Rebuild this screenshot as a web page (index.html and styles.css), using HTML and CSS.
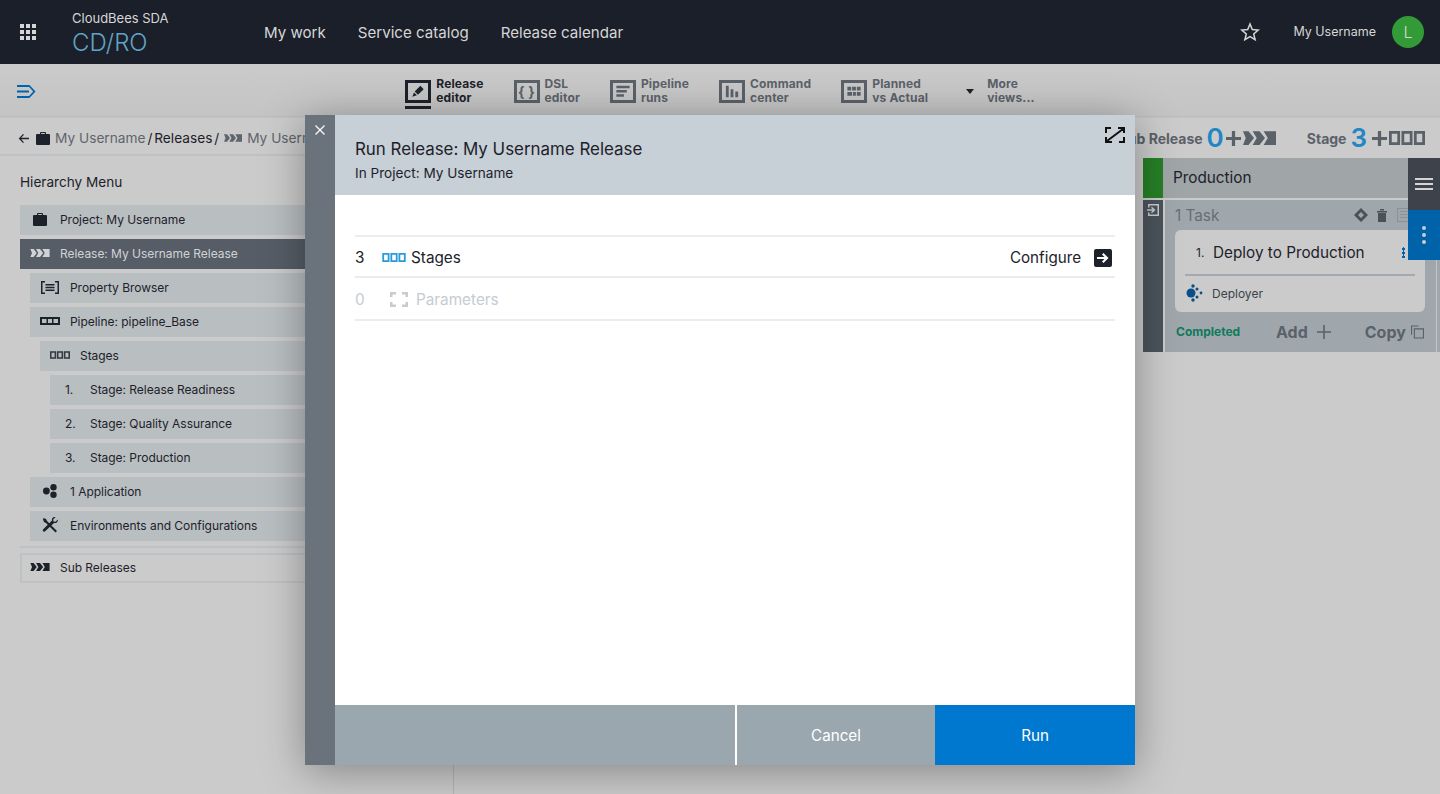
FILE: index.html
```html
<!DOCTYPE html>
<html lang="en">
	<head>
		<meta charset="utf-8">
		<title>Run Release</title>
		<link rel="stylesheet" href="styles.css">
	</head>
	<body>
		<svg class="sprite" width="0" height="0">
			<symbol id="i-release" viewBox="0 0 24 10"><path d="M0 0h4l4 5-4 5H0l2-5zM7 0h5l4 5-4 5H7l3-5zM15 0h9v10h-9l3-5z"/></symbol>
			<symbol id="i-stages" viewBox="0 0 26 10"><path fill-rule="evenodd" d="M0 0h8v10H0zM2 2v6h4V2zM9 0h8v10H9zM11 2v6h4V2zM18 0h8v10h-8zM20 2v6h4V2z"/></symbol>
			<symbol id="i-case" viewBox="0 0 14 13"><path fill-rule="evenodd" d="M4 2V1q0-1 1-1h4q1 0 1 1v1h3q1 0 1 1v9q0 1-1 1H1q-1 0-1-1V3q0-1 1-1zM5.200 1v1h3.600V1z"/></symbol>
			<symbol id="i-plus" viewBox="0 0 14 14"><path d="M5.500 0h3v5.500H14v3H8.500V14h-3V8.500H0v-3h5.500z"/></symbol>
		</svg>

		<header class="topbar">
			<svg class="apps" viewBox="0 0 16 16"><path d="M0 0h4v4H0zM6 0h4v4H6zM12 0h4v4h-4zM0 6h4v4H0zM6 6h4v4H6zM12 6h4v4h-4zM0 12h4v4H0zM6 12h4v4H6zM12 12h4v4h-4z"/></svg>
			<div class="logo">
				<div class="logo-top">CloudBees SDA</div>
				<div class="logo-name">CD/RO</div>
			</div>
			<nav class="topnav">
				<span>My work</span>
				<span>Service catalog</span>
				<span>Release calendar</span>
			</nav>
			<svg class="star" viewBox="0 0 20 20"><path d="M10 2l2.300 5.500 5.900.5-4.500 3.900 1.400 5.800L10 14.600l-5.100 3.100 1.400-5.800L1.800 8l5.900-.5z"/></svg>
			<span class="username">My Username</span>
			<span class="avatar">L</span>
		</header>

		<div class="viewbar">
			<svg class="toggle" viewBox="0 0 19 13"><path d="M0 0h12v2H0zM0 5.500h12v2H0zM0 11h12v2H0zM12.500 0l6 6.500-6 6.500-1.300-1 5-5.500-5-5.500z"/></svg>
			<div class="tabs">
				<div class="tab active">
					<span class="tab-icon"><svg viewBox="0 0 20 18"><path d="M12.500 3l3.500 3.500-6 6L6.500 9zM5.800 10l3 3L4 14.500z"/></svg></span>
					<span>Release<br>editor</span>
				</div>
				<div class="tab">
					<span class="tab-icon tab-code">{ }</span>
					<span>DSL<br>editor</span>
				</div>
				<div class="tab">
					<span class="tab-icon"><svg viewBox="0 0 20 18"><path d="M3 3h14v2.500H3zM3 7.500h11V10H3zM3 12h8v2.500H3z"/></svg></span>
					<span>Pipeline<br>runs</span>
				</div>
				<div class="tab">
					<span class="tab-icon"><svg viewBox="0 0 20 18"><path d="M3.500 3h3v12h-3zM8.500 6.500h3V15h-3zM13.500 9h3v6h-3z"/></svg></span>
					<span>Command<br>center</span>
				</div>
				<div class="tab">
					<span class="tab-icon"><svg viewBox="0 0 20 18"><path d="M3 4h4v4H3zM8 4h4v4H8zM13 4h4v4h-4zM3 9.500h5v4H3zM9 9.500h3v4H9zM13 9.500h4v4h-4z"/></svg></span>
					<span>Planned<br>vs Actual</span>
				</div>
				<div class="tab tab-more">
					<span class="caret"></span>
					<span>More<br>views...</span>
				</div>
			</div>
		</div>

		<div class="workspace">
			<aside class="sidebar">
				<div class="crumbs">
					<svg class="crumb-back" viewBox="0 0 12 12"><path d="M5.500 1L.8 6l4.700 5 1-1-3-3.200H12V5.200H3.500l3-3.200z"/></svg>
					<svg class="crumb-case"><use href="#i-case"/></svg>
					<span>My Username</span>
					<span class="crumb-now">/ Releases /</span>
					<svg class="crumb-rel"><use href="#i-release"/></svg>
					<span>My Username Release</span>
				</div>
				<h2 class="menu-title">Hierarchy Menu</h2>
				<ul class="menu">
					<li class="row">
						<span class="slot"><svg class="ic-case"><use href="#i-case"/></svg></span>Project: My Username
					</li>
					<li class="row current">
						<span class="slot"><svg class="ic-rel"><use href="#i-release"/></svg></span>Release: My Username Release
					</li>
					<li class="row lv2">
						<span class="slot"><svg class="ic-prop" viewBox="0 0 18 13"><path d="M0 0h4v1.500H1.500v10H4V13H0zM18 0h-4v1.500h2.500v10H14V13h4zM4.500 3h9v1.500h-9zM4.500 5.700h9v1.500h-9zM4.500 8.400h9v1.500h-9z"/></svg></span>Property Browser
					</li>
					<li class="row lv2">
						<span class="slot"><svg class="ic-pipe" viewBox="0 0 20 8"><path fill-rule="evenodd" d="M0 0h20v8H0zM2 2v4h4.500V2zM8 2v4h4V2zM13.500 2v4H18V2z"/></svg></span>Pipeline: pipeline_Base
					</li>
					<li class="row lv3">
						<span class="slot"><svg class="ic-stages"><use href="#i-stages"/></svg></span>Stages
					</li>
					<li class="row lv4"><span class="slot num">1.</span>Stage: Release Readiness</li>
					<li class="row lv4"><span class="slot num">2.</span>Stage: Quality Assurance</li>
					<li class="row lv4"><span class="slot num">3.</span>Stage: Production</li>
					<li class="row lv2">
						<span class="slot"><svg class="ic-apps" viewBox="0 0 14 14"><circle cx="3.400" cy="7" r="3.400"/><circle cx="10.500" cy="3.200" r="3.200"/><circle cx="10.500" cy="10.800" r="3.200"/></svg></span>1 Application
					</li>
					<li class="row lv2">
						<span class="slot"><svg class="ic-tools" viewBox="0 0 16 16"><path d="M1.500 1l2.500 1 1 2 8.500 8.500 1.500 1.500-1.500 1.500-1.500-1.500L4 6 2 5 1 2.500z"/><path d="M15.800 2.500l-2.300 2.300-2-.3-.3-2L13.500.2c-1.700-.6-4 .8-3.500 3.300L1.500 12c-.9 1-.9 1.600-.4 2.200.6.700 1.400.7 2.300-.2L12 6c2.500.5 4.300-1.500 3.800-3.500z"/></svg></span>Environments and Configurations
					</li>
					<li class="menu-rule"></li>
					<li class="row outline">
						<span class="slot"><svg class="ic-rel"><use href="#i-release"/></svg></span>Sub Releases
					</li>
				</ul>
			</aside>

			<main class="canvas">
				<div class="stats">
					<span class="stat-name">Sub Release</span>
					<span class="stat-num stat-tight">0</span>
					<svg class="stat-plus"><use href="#i-plus"/></svg>
					<svg class="stat-rel"><use href="#i-release"/></svg>
					<span class="stat-name stat-gap">Stage</span>
					<span class="stat-num">3</span>
					<svg class="stat-plus"><use href="#i-plus"/></svg>
					<svg class="stat-stg"><use href="#i-stages"/></svg>
				</div>
				<section class="stage">
					<div class="stage-head">
						<span class="stage-color"></span>
						<span class="stage-name">Production</span>
					</div>
					<div class="stage-body">
						<div class="stage-strip">
							<svg viewBox="0 0 12 12"><path d="M1 0h11v12H1V8.500h1.500v2h8v-9h-8v2H1z"/><path d="M0 5.200h5.500L4 3.700l1-1L8.500 6 5 9.300l-1-1 1.500-1.500H0z"/></svg>
						</div>
						<div class="tasks">
							<div class="tasks-head">
								<span>1 Task</span>
								<svg class="tasks-ic" viewBox="0 0 14 14"><path fill-rule="evenodd" d="M7 0l7 7-7 7-7-7zM7 4L4 7l3 3 3-3z"/></svg>
								<svg class="tasks-ic" viewBox="0 0 14 14"><path d="M2 3h10v1.500H2zM5 1h4v1.500H5zM3 5h8v9H3z"/></svg>
								<svg class="tasks-ic tasks-list" viewBox="0 0 16 14"><path fill-rule="evenodd" d="M0 0h16v14H0zM1 1v12h14V1zM3 3h10v1H3zM3 6h10v1H3zM3 9h10v1H3z"/></svg>
							</div>
							<div class="card">
								<div class="card-title">
									<span class="card-num">1.</span>
									<span class="card-name">Deploy to Production</span>
									<span class="card-kebab"></span>
								</div>
								<div class="card-foot">
									<svg viewBox="0 0 18 18"><circle cx="6" cy="9" r="4.500"/><circle cx="8" cy="2" r="1.700"/><circle cx="12" cy="5" r="1.500"/><circle cx="16" cy="9" r="1.400"/><circle cx="12" cy="13" r="1.500"/><circle cx="8" cy="16" r="1.700"/></svg>
									<span>Deployer</span>
								</div>
							</div>
							<div class="tasks-foot">
								<span class="status">Completed</span>
								<span class="foot-add">Add</span>
								<svg class="foot-plus" viewBox="0 0 14 14"><path d="M6.200 0h1.600v6.200H14v1.600H7.800V14H6.200V7.800H0V6.200h6.200z"/></svg>
								<span class="foot-copy">Copy</span>
								<svg class="foot-dup" viewBox="0 0 14 14"><path fill-rule="evenodd" d="M0 0h8v1.200H1.200V10H0zM3 3h11v11H3zM4.200 4.200v8.600h8.600V4.200z"/></svg>
							</div>
						</div>
						<div class="next-stage"></div>
					</div>
				</section>
				<div class="side-tools">
					<button class="side-menu"><span></span><span></span><span></span></button>
					<button class="side-more"><span></span><span></span><span></span></button>
				</div>
			</main>
		</div>

		<div class="dialog">
			<div class="dialog-rail">
				<svg viewBox="0 0 10 10"><path d="M1 0l4 4 4-4 1 1-4 4 4 4-1 1-4-4-4 4-1-1 4-4-4-4z"/></svg>
			</div>
			<div class="dialog-main">
				<div class="dialog-head">
					<div class="dialog-title">Run Release: My Username Release</div>
					<div class="dialog-sub">In Project: My Username</div>
					<svg class="dialog-expand" viewBox="0 0 20 16"><path d="M1 6V1h5M19 10v5h-5M2 14L18 2M13 1h6v5M7 15H1v-5"/></svg>
				</div>
				<div class="dialog-body">
					<div class="line">
						<span class="line-count">3</span>
						<svg class="line-stages"><use href="#i-stages"/></svg>
						<span>Stages</span>
						<span class="line-action">Configure</span>
						<svg class="line-go" viewBox="0 0 18 18"><path fill-rule="evenodd" d="M2 0h14q2 0 2 2v14q0 2-2 2H2q-2 0-2-2V2q0-2 2-2zM9.500 4L8 5.500 10.500 8H3v2h7.500L8 12.500 9.500 14l5-5z"/></svg>
					</div>
					<div class="line disabled">
						<span class="line-count">0</span>
						<svg class="line-params" viewBox="0 0 18 15"><path d="M0 0h6v2.500H2.500v2.500H0zM18 0h-6v2.500h3.500v2.500H18zM0 15h6v-2.500H2.500V10H0zM18 15h-6v-2.500h3.500V10H18z"/></svg>
						<span>Parameters</span>
					</div>
				</div>
				<div class="dialog-foot">
					<span class="foot-space"></span>
					<button class="btn-cancel">Cancel</button>
					<button class="btn-run">Run</button>
				</div>
			</div>
		</div>
	</body>
</html>
```

FILE: styles.css
```css
* {
	box-sizing: border-box;
}

body {
	position: relative;
	width: 1440px;
	height: 794px;
	margin: 0;
	overflow: hidden;
	font-family: Inter, 'Liberation Sans', sans-serif;
	color: #1d222a;
	background-color: #cbcbcb;
}

svg {
	display: block;
	fill: currentColor;
	flex: none;
}

.sprite {
	position: absolute;
}

/* Top bar */

.topbar {
	display: flex;
	align-items: center;
	height: 64px;
	padding-left: 20px;
	padding-right: 16px;
	color: #d6d6d6;
	background-color: #1a1f29;
}

.apps {
	width: 16px;
	height: 16px;
}

.logo {
	width: 192px;
	margin-left: 36px;
}

.logo-top {
	font-size: 13px;
	line-height: 16px;
	margin-top: 4px;
}

.logo-name {
	font-size: 24px;
	line-height: 30px;
	margin-top: 2px;
	font-weight: 300;
	color: #62a3c6;
}

.topnav {
	display: flex;
	gap: 32px;
	font-size: 15.100px;
	flex: 1;
}

.star {
	width: 20px;
	height: 20px;
	fill: none;
	stroke: currentColor;
	stroke-width: 1.5;
	margin-right: 33px;
}

.username {
	font-size: 12.500px;
	margin-right: 16px;
	margin-top: -2px;
}

.avatar {
	display: flex;
	align-items: center;
	justify-content: center;
	width: 32px;
	height: 32px;
	border-radius: 50%;
	font-size: 16px;
	font-weight: 300;
	background-color: #329b38;
}

/* Views */

.viewbar {
	display: grid;
	grid-template-columns: 1fr auto 1fr;
	align-items: center;
	height: 52px;
	padding-left: 17px;
	padding-top: 2px;
	background-image: linear-gradient(to bottom, #cacaca, #c4c4c4);
	box-shadow: 0 1px 2px rgba(0, 0, 0, 0.1);
}

.toggle {
	width: 19px;
	height: 13px;
	color: #0064ad;
}

.tabs {
	display: flex;
	gap: 30px;
	grid-column: 2;
	margin-left: -17px;
}

.tab {
	position: relative;
	display: flex;
	align-items: center;
	gap: 5px;
	font-size: 12px;
	line-height: 14px;
	font-weight: 700;
	letter-spacing: 0.15px;
	color: #5b6169;
}

.tab-icon {
	display: flex;
	align-items: center;
	justify-content: center;
	width: 26px;
	height: 23px;
	margin-top: 1px;
	border: 3px solid currentColor;
}

.tab-icon svg {
	width: 20px;
	height: 17px;
}

.tab-code {
	font-size: 14px;
	font-weight: 700;
}

.active {
	color: #1d222a;
}

.active::after {
	content: '';
	position: absolute;
	left: 0;
	bottom: -4px;
	width: 26px;
	height: 3px;
	background-color: #1d222a;
}

.tab-more {
	gap: 13px;
	margin-left: 8px;
}

.caret {
	border-style: solid;
	border-width: 5px 4.500px 0 4.500px;
	border-color: #1d222a transparent transparent transparent;
}

/* Hierarchy */

.workspace {
	display: flex;
	height: 678px;
}

.sidebar {
	width: 454px;
	border-right: 1px solid #b5b5b5;
	overflow: hidden;
	flex: none;
}

.crumbs {
	display: flex;
	align-items: center;
	gap: 2px;
	height: 40px;
	padding-left: 18px;
	padding-top: 6px;
	font-size: 13.700px;
	color: #5f656c;
	white-space: nowrap;
	border-bottom: 2px solid #bdc2c5;
}

.crumb-back {
	width: 11px;
	height: 11px;
	color: #1d222a;
	margin-right: 5px;
}

.crumb-case {
	width: 14px;
	height: 13px;
	color: #1d222a;
	margin-right: 3px;
}

.crumb-now {
	color: #1d222a;
	word-spacing: -2px;
}

.crumb-rel {
	width: 18px;
	height: 8px;
	margin-left: 3px;
	margin-right: 3px;
}

.menu-title {
	margin: 17px 0 14px 20px;
	font-size: 13.600px;
	line-height: 18px;
	font-weight: 400;
}

.menu {
	display: flex;
	flex-direction: column;
	gap: 4px;
	margin: 0;
	padding: 0 0 0 20px;
	list-style: none;
}

.row {
	display: flex;
	align-items: center;
	height: 30px;
	padding-left: 10px;
	padding-bottom: 2px;
	font-size: 12px;
	letter-spacing: -0.04px;
	white-space: nowrap;
	background-color: #b9bec1;
}

.slot {
	display: flex;
	align-items: center;
	width: 30px;
	flex: none;
}

.num {
	padding-left: 5px;
}

.current {
	color: #cfd3d6;
	background-color: #565d66;
}

.lv2 {
	margin-left: 10px;
}

.lv3 {
	margin-left: 20px;
}

.lv4 {
	margin-left: 30px;
}

.menu-rule {
	height: 2px;
	margin-top: 1px;
	margin-bottom: 1px;
	background-color: #bdc2c5;
}

.outline {
	background: none;
	border: 2px solid #bdc2c5;
	padding-left: 8px;
}

.ic-case {
	width: 14px;
	height: 13px;
	margin-left: 3px;
}

.ic-rel {
	width: 20px;
	height: 8px;
}

.ic-prop {
	width: 18px;
	height: 13px;
	margin-left: 1px;
}

.ic-pipe {
	width: 20px;
	height: 8px;
}

.ic-stages {
	width: 20px;
	height: 8px;
	color: #333941;
}

.ic-apps {
	width: 14px;
	height: 14px;
	margin-left: 3px;
}

.ic-tools {
	width: 16px;
	height: 16px;
	margin-left: 2px;
}

/* Stage view */

.canvas {
	flex: 1;
	min-width: 0;
	position: relative;
}

.stats {
	display: flex;
	align-items: center;
	justify-content: flex-end;
	height: 42px;
	padding-right: 15px;
	padding-top: 2px;
	color: #5b6169;
}

.stat-name {
	font-size: 14px;
	font-weight: 700;
}

.stat-gap {
	margin-left: 31px;
}

.stat-num {
	margin-left: 4px;
	font-size: 26px;
	line-height: 26px;
	font-weight: 600;
	color: #2186c4;
}

.stat-tight {
	margin-right: -3px;
}

.stat-plus {
	width: 15px;
	height: 15px;
	margin-left: 5px;
	margin-right: 2px;
}

.stat-rel {
	width: 33px;
	height: 14px;
}

.stat-stg {
	width: 36px;
	height: 14px;
}

.stage {
	width: 297px;
	margin-left: auto;
}

.stage-head {
	display: flex;
	align-items: center;
	height: 40px;
	margin-bottom: 2px;
	background-color: #a0a5a8;
}

.stage-color {
	width: 20px;
	height: 100%;
	background-color: #267f26;
}

.stage-name {
	margin-left: 10px;
	margin-top: -2px;
	font-size: 15.300px;
}

.stage-body {
	display: flex;
	gap: 2px;
	height: 152px;
}

.stage-strip {
	width: 20px;
	padding: 4px;
	color: #c8ccce;
	background-color: #4b535b;
}

.stage-strip svg {
	width: 12px;
	height: 12px;
}

.tasks {
	width: 271px;
	padding: 0 11px 0 10px;
	background-color: #9fa7ad;
}

.tasks-head {
	display: flex;
	align-items: center;
	gap: 7px;
	height: 30px;
	padding-right: 11px;
	font-size: 15.300px;
	color: #676e75;
}

.tasks-head span {
	flex: 1;
}

.tasks-ic {
	width: 14px;
	height: 14px;
	color: #4a5159;
}

.tasks-list {
	width: 18px;
	color: #8a9298;
}

.card {
	height: 82px;
	padding: 0 10px;
	border-radius: 6px;
	background-color: #cbcbcb;
}

.card-title {
	display: flex;
	align-items: center;
	height: 46px;
	padding-left: 11px;
	border-bottom: 2px solid #a3a9ae;
}

.card-num {
	width: 17px;
	font-size: 12px;
}

.card-name {
	flex: 1;
	font-size: 15.300px;
}

.card-kebab {
	width: 3px;
	height: 11px;
	margin-right: 10px;
	background-image: radial-gradient(circle, #0064ad 1.500px, transparent 1.600px);
	background-size: 3px 4px;
}

.card-foot {
	display: flex;
	align-items: center;
	gap: 9px;
	height: 36px;
	padding-bottom: 2px;
	font-size: 12px;
	color: #3c4249;
}

.card-foot svg {
	width: 18px;
	height: 18px;
	color: #0b4f86;
}

.tasks-foot {
	display: flex;
	align-items: center;
	height: 40px;
	font-weight: 700;
	font-size: 16px;
	color: #5b6169;
}

.status {
	width: 100px;
	margin-left: 1px;
	margin-top: -2px;
	font-size: 12px;
	color: #0e7a5a;
}

.foot-plus {
	width: 14px;
	height: 14px;
	margin-left: 9px;
	margin-right: 34px;
}

.foot-dup {
	width: 13px;
	height: 14px;
	margin-left: 5px;
}

.next-stage {
	flex: 1;
	border-left: 1px solid #c6c6c6;
	background-color: #9fa7ad;
	margin-left: -2px;
}

/* Right hand tools, they sit over the stage */

.side-tools {
	position: absolute;
	top: 42px;
	right: 0;
	width: 32px;
}

.side-tools button {
	display: flex;
	align-items: center;
	justify-content: center;
	flex-direction: column;
	width: 32px;
	padding: 0;
	border: 0;
}

.side-menu {
	height: 52px;
	gap: 3px;
	background-color: #3e424a;
}

.side-menu span {
	width: 18px;
	height: 2px;
	background-color: #d4d4d4;
}

.side-more {
	height: 50px;
	gap: 3px;
	background-color: #0062a8;
}

.side-more span {
	width: 4px;
	height: 4px;
	border-radius: 50%;
	background-color: #c6ced6;
}

/* Dialog */

.dialog {
	position: absolute;
	left: 305px;
	top: 115px;
	display: flex;
	width: 830px;
	height: 650px;
	box-shadow: 0 6px 40px rgba(0, 0, 0, 0.35);
}

.dialog-rail {
	width: 30px;
	padding: 10px;
	color: #f2f2f2;
	background-color: #6a727c;
}

.dialog-rail svg {
	width: 10px;
	height: 10px;
}

.dialog-main {
	display: flex;
	flex-direction: column;
	flex: 1;
	background-color: white;
}

.dialog-head {
	position: relative;
	height: 80px;
	padding: 23px 20px 0;
	background-color: #c7cfd7;
}

.dialog-title {
	font-size: 16.900px;
	line-height: 22px;
}

.dialog-sub {
	margin-top: 4px;
	font-size: 13.600px;
	line-height: 18px;
}

.dialog-expand {
	position: absolute;
	top: 12px;
	right: 10px;
	width: 20px;
	height: 16px;
	fill: none;
	stroke: #111;
	stroke-width: 2;
}

.dialog-body {
	flex: 1;
	padding: 40px 20px 0;
}

.line {
	display: flex;
	align-items: center;
	height: 41px;
	padding-top: 2px;
	font-size: 15.300px;
	border-top: 2px solid #e9edf0;
}

.line:last-child {
	height: 45px;
	border-bottom: 2px solid #e9edf0;
}

.line-count {
	width: 27px;
	font-size: 15.300px;
}

.line-stages {
	width: 24px;
	height: 9px;
	margin-right: 5px;
	color: #2b9ad8;
}

.line-action {
	margin-left: auto;
	font-size: 15.200px;
}

.line-go {
	width: 18px;
	height: 18px;
	margin-left: 13px;
	margin-right: 3px;
}

.disabled {
	color: #c5ccd2;
}

.line-params {
	width: 18px;
	height: 15px;
	margin-left: 8px;
	margin-right: 8px;
}

.dialog-foot {
	display: flex;
	height: 60px;
	background-color: #9aa7ae;
}

.foot-space {
	width: 402px;
	border-right: 2px solid white;
}

.dialog-foot button {
	padding: 0;
	border: 0;
	font-family: inherit;
	font-size: 15.200px;
	color: white;
}

.btn-cancel {
	flex: 1;
	background-color: #9aa7ae;
}

.dialog-foot .btn-run {
	width: 200px;
	background-color: #0078d0;
}
```
